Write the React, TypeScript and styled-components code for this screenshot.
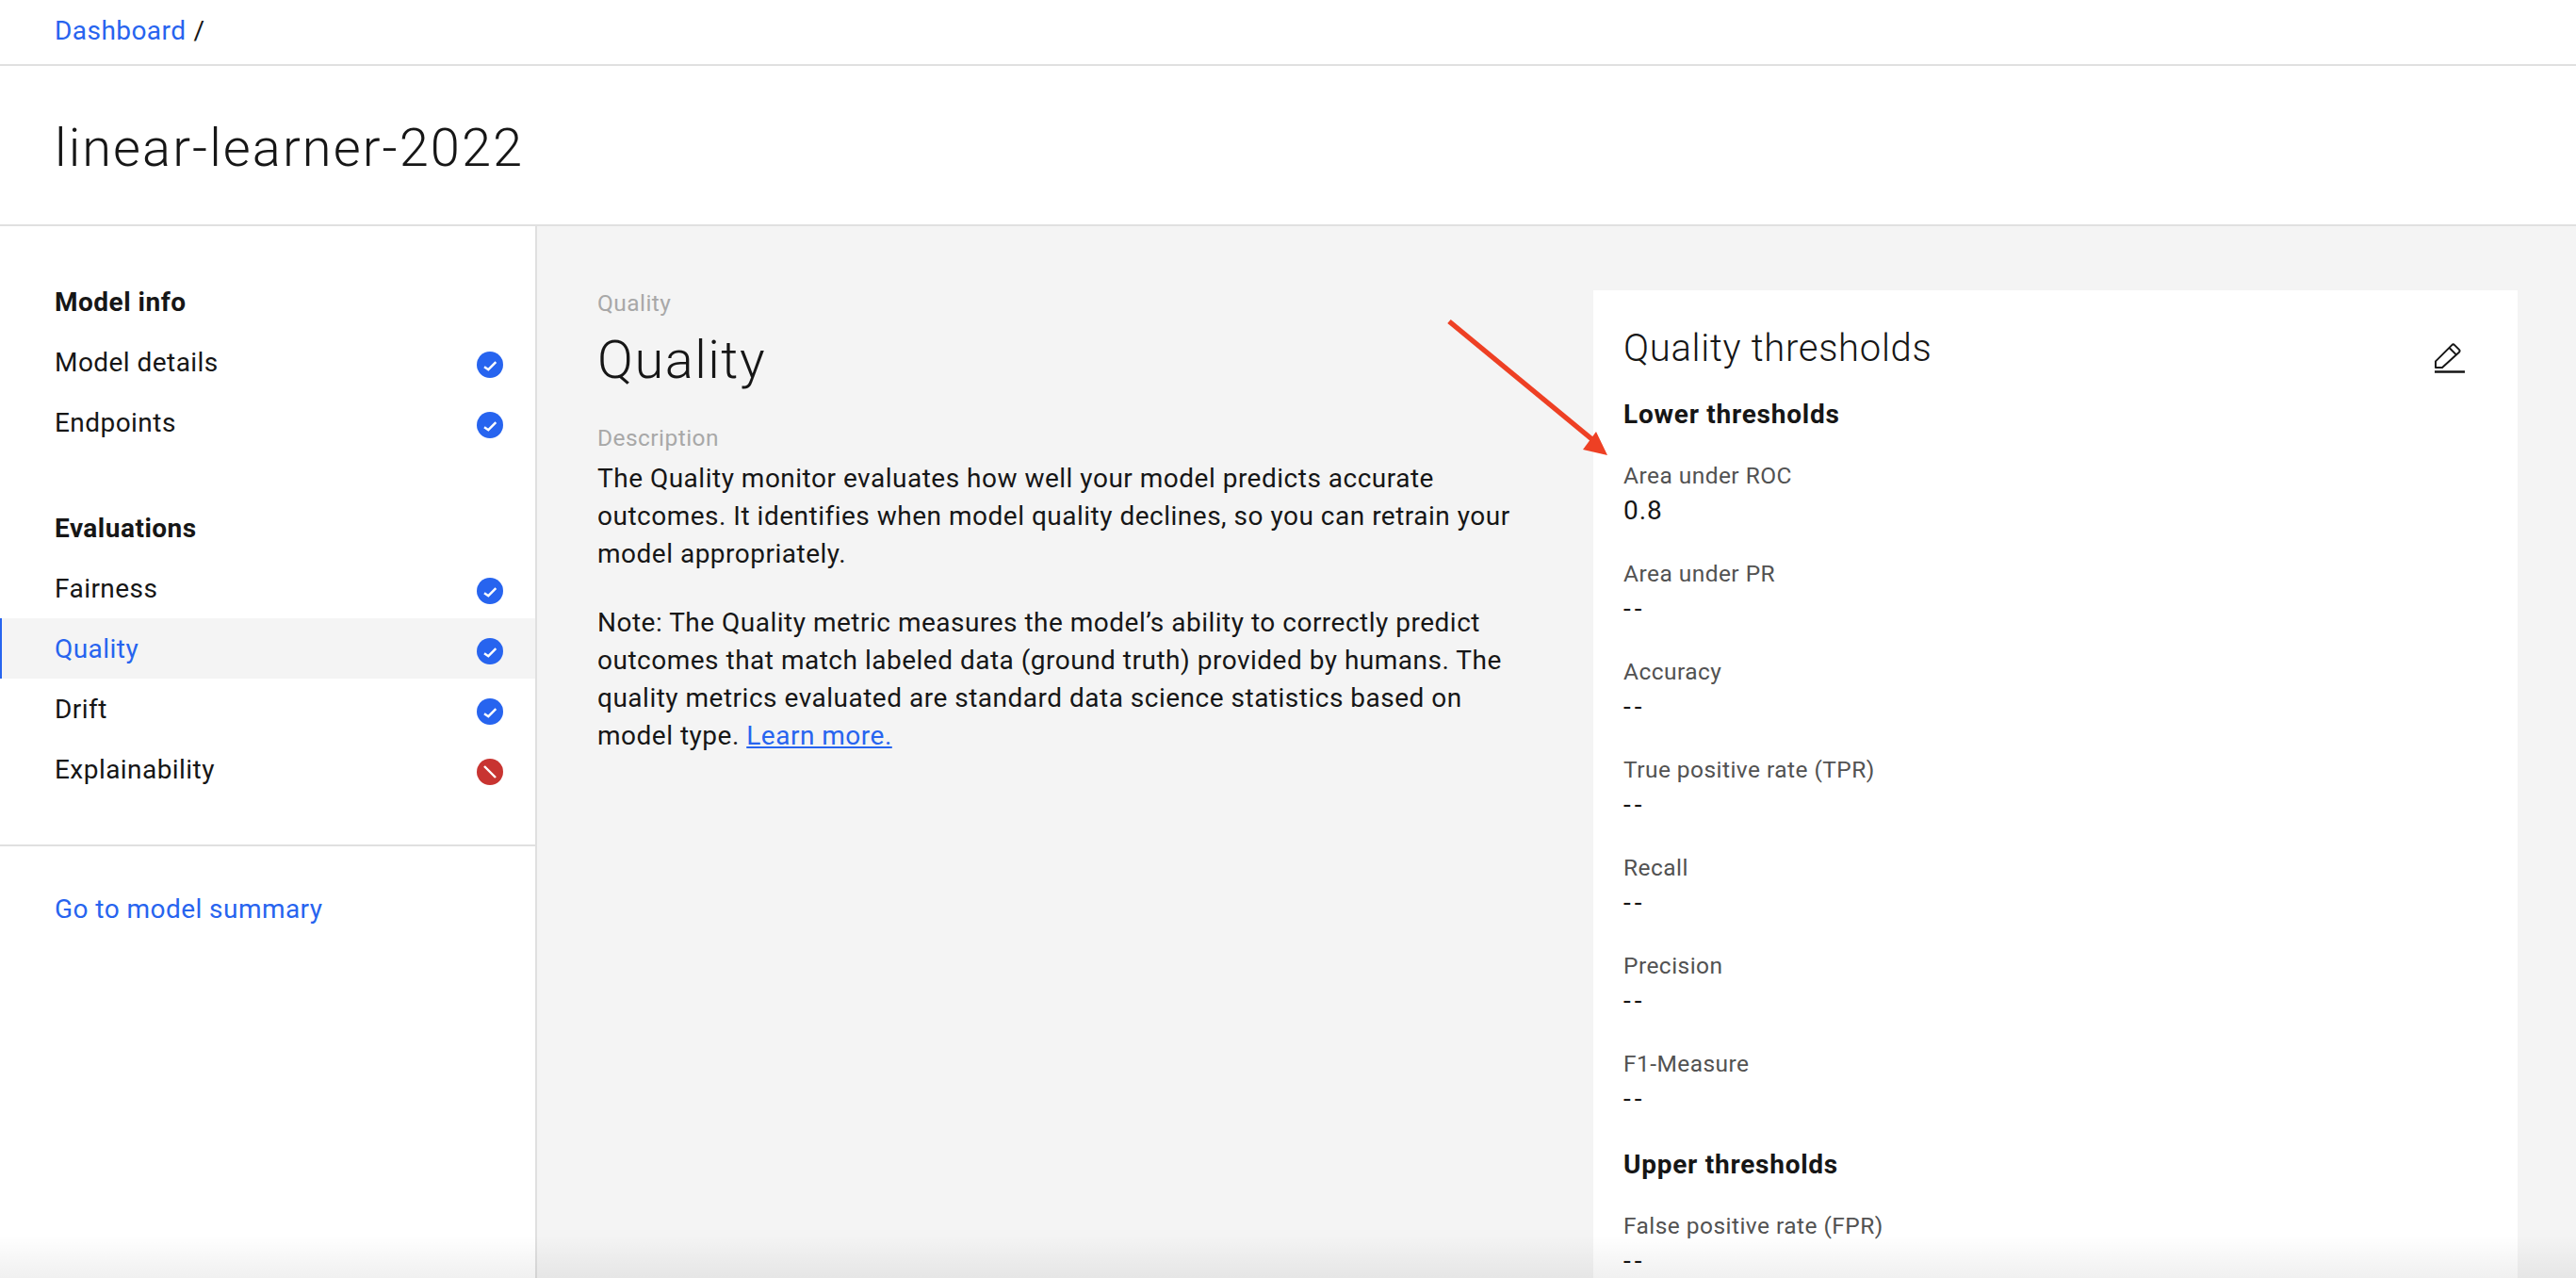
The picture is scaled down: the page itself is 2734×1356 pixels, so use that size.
import React from "react";
import styled, { createGlobalStyle } from "styled-components";

const Global = createGlobalStyle`
  html, body { margin: 0; padding: 0; background: #fff; }
  * { box-sizing: border-box; }
  body { font-family: Roboto, "Liberation Sans", sans-serif; color: #161616; letter-spacing: 0.45px; }
`;

const BLUE = "#2764ef";
const LINE = "#e0e0e0";

const Page = styled.div`
  position: relative;
  width: 2734px;
  height: 1356px;
  overflow: hidden;
  display: flex;
  flex-direction: column;
`;
const TopBar = styled.header`
  height: 70px;
  border-bottom: 2px solid ${LINE};
  padding: 13px 58px 0;
  font-size: 28px;
  line-height: 40px;
`;
const Crumb = styled.a`
  color: ${BLUE};
  margin-right: 8px;
`;
const TitleBar = styled.div`
  height: 170px;
  border-bottom: 2px solid ${LINE};
  padding: 0 58px;
  display: flex;
  align-items: center;
`;
const Title = styled.h1`
  margin: 5px 0 0;
  font-size: 56px;
  line-height: 72px;
  font-weight: 300;
  letter-spacing: 2.05px;
`;
const Body = styled.div`
  flex: 1;
  display: flex;
  min-height: 0;
`;
const Side = styled.aside`
  width: 570px;
  flex: none;
  border-right: 2px solid ${LINE};
  padding-top: 48px;
`;
const NavGroup = styled.nav`
  margin-bottom: 48px;
`;
const NavHead = styled.div`
  height: 64px;
  display: flex;
  align-items: center;
  padding-left: 58px;
  font-size: 28px;
  font-weight: 700;
  letter-spacing: 0.5px;
`;
const NavRow = styled.a<{ $active?: boolean }>`
  height: 64px;
  display: flex;
  align-items: center;
  justify-content: space-between;
  padding: 0 34px 0 ${(p) => (p.$active ? 56 : 58)}px;
  font-size: 28px;
  color: ${(p) => (p.$active ? BLUE : "#161616")};
  background: ${(p) => (p.$active ? "#f4f4f4" : "transparent")};
  border-left: ${(p) => (p.$active ? `2px solid ${BLUE}` : "0")};
`;
const StatusSvg = styled.svg`
  width: 28px;
  height: 28px;
  margin-top: 6px;
  flex: none;
`;
const SideFoot = styled.div`
  border-top: 2px solid ${LINE};
  padding: 47px 58px 0;
  font-size: 28px;
  line-height: 40px;
`;
const BlueLink = styled.a`
  color: ${BLUE};
`;
const Main = styled.main`
  flex: 1;
  min-width: 0;
  background: #f4f4f4;
  display: flex;
  padding: 68px 62px 0 64px;
`;
const Intro = styled.section`
  width: 1057px;
  flex: none;
  margin-top: -4px;
`;
const Eyebrow = styled.div`
  font-size: 24.5px;
  line-height: 36px;
  color: #a8a8a8;
`;
const Heading = styled.h2`
  margin: 6px 0 0;
  font-size: 56px;
  line-height: 72px;
  font-weight: 300;
  letter-spacing: 1.5px;
`;
const DescLabel = styled(Eyebrow)`
  margin-top: 29px;
`;
const Para = styled.p`
  margin: 5px 0 33px;
  font-size: 28px;
  line-height: 40px;
  width: 980px;
  letter-spacing: 0.5px;
`;
const Underlined = styled(BlueLink)`
  text-decoration: underline;
`;
const Panel = styled.section`
  width: 981px;
  flex: none;
  background: #fff;
  padding: 36px 56px 0 32px;
`;
const PanelHead = styled.div`
  display: flex;
  justify-content: space-between;
  align-items: flex-end;
`;
const PanelTitle = styled.h3`
  margin: 0;
  font-size: 40px;
  line-height: 52px;
  font-weight: 300;
  letter-spacing: 0.7px;
`;
const SubHead = styled.h4<{ $first?: boolean }>`
  margin: ${(p) => (p.$first ? 24 : 30)}px 0 0;
  font-size: 28px;
  line-height: 40px;
  font-weight: 700;
  letter-spacing: 0.75px;
`;
const Fields = styled.div`
  margin-top: 28px;
  display: flex;
  flex-direction: column;
  gap: 30px;
`;
const Field = styled.div``;
const FieldLabel = styled.div`
  font-size: 24.5px;
  line-height: 34px;
  color: #525252;
`;
const FieldValue = styled.div<{ $empty?: boolean }>`
  font-size: 28px;
  line-height: 40px;
  letter-spacing: ${(p) => (p.$empty ? 4 : 1)}px;
`;
const Annotation = styled.svg`
  position: absolute;
  left: 1530px;
  top: 330px;
  width: 190px;
  height: 165px;
`;
const BottomFade = styled.div`
  position: absolute;
  left: 0;
  right: 0;
  bottom: 0;
  height: 46px;
  background: linear-gradient(to bottom, rgba(0, 0, 0, 0), rgba(0, 0, 0, 0.06));
`;

const Ok = () => (
  <StatusSvg viewBox="0 0 28 28">
    <circle cx="14" cy="14" r="14" fill={BLUE} />
    <path d="M8 16.2l4.3 3 8-8" fill="none" stroke="#fff" strokeWidth="2.4" />
  </StatusSvg>
);
const Blocked = () => (
  <StatusSvg viewBox="0 0 28 28">
    <circle cx="14" cy="14" r="14" fill="#c83431" />
    <path d="M8 8l12 12" fill="none" stroke="#fff" strokeWidth="2.4" />
  </StatusSvg>
);
const Pencil = () => (
  <svg width="32" height="32" viewBox="0 0 32 32" fill="none">
    <path d="M0 30.5h32" stroke="#161616" strokeWidth="2.5" />
    <path
      d="M1 26v-6.6L18.3 2.1a2 2 0 0 1 2.8 0l4.8 4.8a2 2 0 0 1 0 2.8L8 26H1z"
      stroke="#161616"
      strokeWidth="2"
      strokeLinejoin="round"
    />
    <path d="M15.5 5l7.4 7.4" stroke="#161616" strokeWidth="2" />
  </svg>
);

const lower = ["Area under ROC", "Area under PR", "Accuracy", "True positive rate (TPR)", "Recall", "Precision", "F1-Measure"];

export default function App() {
  return (
    <>
      <Global />
      <Page>
        <TopBar>
          <Crumb>Dashboard</Crumb>/
        </TopBar>
        <TitleBar>
          <Title>linear-learner-2022</Title>
        </TitleBar>
        <Body>
          <Side>
            <NavGroup>
              <NavHead>Model info</NavHead>
              <NavRow>Model details<Ok /></NavRow>
              <NavRow>Endpoints<Ok /></NavRow>
            </NavGroup>
            <NavGroup>
              <NavHead>Evaluations</NavHead>
              <NavRow>Fairness<Ok /></NavRow>
              <NavRow $active>Quality<Ok /></NavRow>
              <NavRow>Drift<Ok /></NavRow>
              <NavRow>Explainability<Blocked /></NavRow>
            </NavGroup>
            <SideFoot>
              <BlueLink>Go to model summary</BlueLink>
            </SideFoot>
          </Side>
          <Main>
            <Intro>
              <Eyebrow>Quality</Eyebrow>
              <Heading>Quality</Heading>
              <DescLabel>Description</DescLabel>
              <Para>
                The Quality monitor evaluates how well your model predicts accurate outcomes. It identifies when model
                quality declines, so you can retrain your model appropriately.
              </Para>
              <Para>
                Note: The Quality metric measures the model’s ability to correctly predict outcomes that match labeled
                data (ground truth) provided by humans. The quality metrics evaluated are standard data science
                statistics based on model type. <Underlined>Learn more.</Underlined>
              </Para>
            </Intro>
            <Panel>
              <PanelHead>
                <PanelTitle>Quality thresholds</PanelTitle>
                <Pencil />
              </PanelHead>
              <SubHead $first>Lower thresholds</SubHead>
              <Fields>
                {lower.map((l, i) => (
                  <Field key={l}>
                    <FieldLabel>{l}</FieldLabel>
                    <FieldValue $empty={i !== 0}>{i === 0 ? "0.8" : "--"}</FieldValue>
                  </Field>
                ))}
              </Fields>
              <SubHead>Upper thresholds</SubHead>
              <Fields>
                <Field>
                  <FieldLabel>False positive rate (FPR)</FieldLabel>
                  <FieldValue $empty>--</FieldValue>
                </Field>
              </Fields>
            </Panel>
          </Main>
        </Body>
        <Annotation viewBox="1530 330 190 165">
          <path d="M1538 341L1692 468" stroke="#ee4024" strokeWidth="5.5" fill="none" />
          <path d="M1694 458L1680 477L1706 483Z" fill="#ee4024" />
        </Annotation>
        <BottomFade />
      </Page>
    </>
  );
}
